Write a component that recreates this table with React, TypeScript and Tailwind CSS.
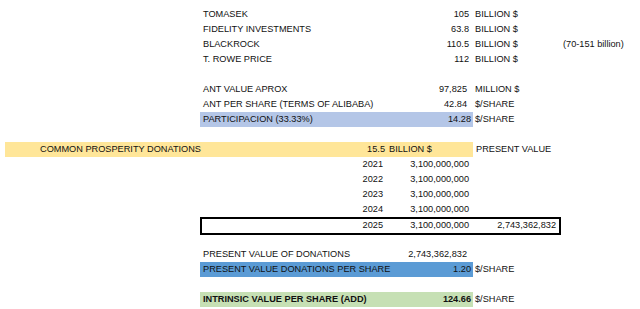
import React from 'react';

// column grid: A 0-200 | B 200-386 | C 386-473 | D 473-561 | E 561-640
const grid = 'grid grid-cols-[200px_186px_87px_88px_1fr] h-[15px] items-center';

const Row = ({ children }: { children?: React.ReactNode }) => <div className={grid}>{children}</div>;

const Label = ({ text, bg = '', bold = false }: { text: string; bg?: string; bold?: boolean }) => (
    <div className={`col-start-2 relative z-10 h-full flex items-center pl-[3px] whitespace-nowrap ${bg} ${bold ? 'font-bold' : ''}`}>{text}</div>
);

const Num = ({ text, bg = '', pr = 'pr-[4px]', bold = false }: { text: string; bg?: string; pr?: string; bold?: boolean }) => (
    <div className={`col-start-3 h-full flex items-center justify-end whitespace-nowrap ${pr} ${bg} ${bold ? 'font-bold' : ''}`}>{text}</div>
);

const Unit = ({ text }: { text: string }) => <div className="col-start-4 pl-[2px] whitespace-nowrap">{text}</div>;

const years = ['2021', '2022', '2023', '2024'];

export default function App() {
    return (
        <div
            className="w-[640px] h-[309px] bg-white pt-[7px] text-[9.2px] text-[#111] overflow-hidden"
            style={{ fontFamily: '"Liberation Sans", Arial, sans-serif' }}
        >
            <Row>
                <Label text="TOMASEK" />
                <Num text="105" />
                <Unit text="BILLION $" />
            </Row>
            <Row>
                <Label text="FIDELITY INVESTMENTS" />
                <Num text="63.8" />
                <Unit text="BILLION $" />
            </Row>
            <Row>
                <Label text="BLACKROCK" />
                <Num text="110.5" />
                <Unit text="BILLION $" />
                <div className="col-start-5 pl-[2px] whitespace-nowrap">(70-151 billion)</div>
            </Row>
            <Row>
                <Label text="T. ROWE PRICE" />
                <Num text="112" />
                <Unit text="BILLION $" />
            </Row>
            <Row />
            <Row>
                <Label text="ANT VALUE APROX" />
                <Num text="97,825" pr="pr-[6px]" />
                <Unit text="MILLION $" />
            </Row>
            <Row>
                <Label text="ANT PER SHARE (TERMS OF ALIBABA)" />
                <Num text="42.84" pr="pr-[6px]" />
                <Unit text="$/SHARE" />
            </Row>
            <Row>
                <Label text="PARTICIPACION (33.33%)" bg="bg-[#b4c6e7]" />
                <Num text="14.28" bg="bg-[#b4c6e7]" pr="pr-[2px]" />
                <Unit text="$/SHARE" />
            </Row>
            <Row />
            {/* common prosperity row, yellow across A..C */}
            <Row>
                <div className="col-start-1 relative z-10 h-full ml-[5px] pl-[35px] flex items-center bg-[#ffe699] whitespace-nowrap">
                    COMMON PROSPERITY DONATIONS
                </div>
                <div className="col-start-2 h-full flex items-center justify-end pr-[1px] bg-[#ffe699]">15.5</div>
                <div className="col-start-3 h-full flex items-center pl-[3px] bg-[#ffe699] whitespace-nowrap">BILLION $</div>
                <div className="col-start-4 pl-[3px] whitespace-nowrap">PRESENT VALUE</div>
            </Row>
            {years.map((y) => (
                <Row key={y}>
                    <div className="col-start-2 text-right pr-[3px]">{y}</div>
                    <Num text="3,100,000,000" />
                </Row>
            ))}
            <Row>
                <div className="col-start-2 h-full flex items-center justify-end pr-[3px] border-y-2 border-l-2 border-black">2025</div>
                <div className="col-start-3 h-full flex items-center justify-end pr-[4px] border-y-2 border-black">3,100,000,000</div>
                <div className="col-start-4 h-full flex items-center justify-end pr-[3px] border-y-2 border-r-2 border-black">2,743,362,832</div>
            </Row>
            <Row />
            <Row>
                <Label text="PRESENT VALUE OF DONATIONS" />
                <Num text="2,743,362,832" pr="pr-[6px]" />
            </Row>
            <Row>
                <Label text="PRESENT VALUE DONATIONS PER SHARE" bg="bg-[#5b9bd5]" />
                <Num text="1.20" bg="bg-[#5b9bd5]" pr="pr-[2px]" />
                <Unit text="$/SHARE" />
            </Row>
            <Row />
            <Row>
                <Label text="INTRINSIC VALUE PER SHARE (ADD)" bg="bg-[#c6e0b4]" bold />
                <Num text="124.66" bg="bg-[#c6e0b4]" pr="pr-[2px]" bold />
                <Unit text="$/SHARE" />
            </Row>
        </div>
    );
}
